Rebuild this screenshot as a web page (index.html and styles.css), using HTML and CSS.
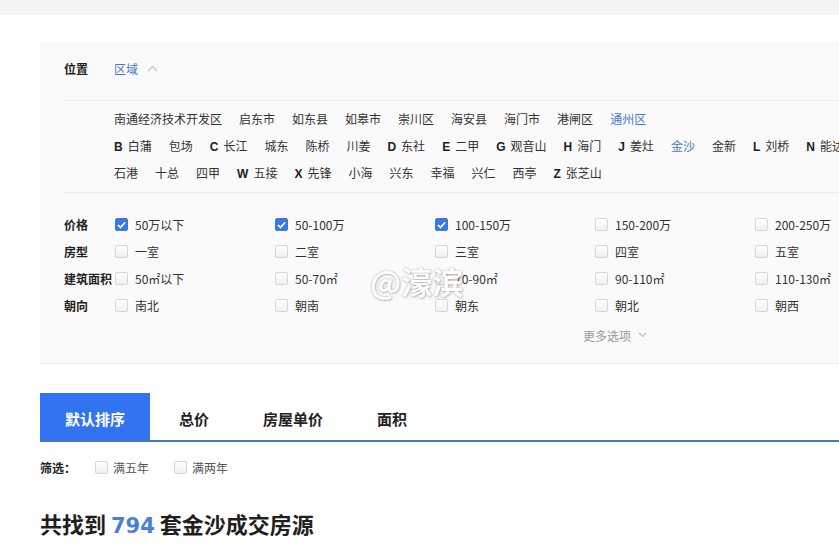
FILE: index.html
```html
<!DOCTYPE html>
<html lang="zh-CN">
<head>
    <meta charset="UTF-8">
    <title>金沙成交房源</title>
    <link rel="stylesheet" href="styles.css">
</head>
<body>
    <div class="topbar"></div>

    <div class="filter-panel">
        <div class="pos-row">
            <span class="label">位置</span>
            <a href="#" class="link active">区域</a>
            <svg class="caret" width="11" height="7" viewBox="0 0 11 7"><polyline points="1,6 5.5,1.5 10,6" fill="none" stroke="#c4c4c4" stroke-width="1.3"/></svg>
        </div>

        <div class="areas">
            <div class="area-row">
                <a href="#">南通经济技术开发区</a>
                <a href="#">启东市</a>
                <a href="#">如东县</a>
                <a href="#">如皋市</a>
                <a href="#">崇川区</a>
                <a href="#">海安县</a>
                <a href="#">海门市</a>
                <a href="#">港闸区</a>
                <a href="#" class="active">通州区</a>
            </div>
            <div class="area-row">
                <a href="#"><b>B</b>白蒲</a>
                <a href="#">包场</a>
                <a href="#"><b>C</b>长江</a>
                <a href="#">城东</a>
                <a href="#">陈桥</a>
                <a href="#">川姜</a>
                <a href="#"><b>D</b>东社</a>
                <a href="#"><b>E</b>二甲</a>
                <a href="#"><b>G</b>观音山</a>
                <a href="#"><b>H</b>海门</a>
                <a href="#"><b>J</b>姜灶</a>
                <a href="#" class="active">金沙</a>
                <a href="#">金新</a>
                <a href="#"><b>L</b>刘桥</a>
                <a href="#"><b>N</b>能达</a>
                <a href="#"><b>P</b>平潮</a>
                <a href="#"><b>S</b>三余</a>
            </div>
            <div class="area-row">
                <a href="#">石港</a>
                <a href="#">十总</a>
                <a href="#">四甲</a>
                <a href="#"><b>W</b>五接</a>
                <a href="#"><b>X</b>先锋</a>
                <a href="#">小海</a>
                <a href="#">兴东</a>
                <a href="#">幸福</a>
                <a href="#">兴仁</a>
                <a href="#">西亭</a>
                <a href="#"><b>Z</b>张芝山</a>
            </div>
        </div>

        <div class="options">
            <div class="opt-row">
                <span class="label">价格</span>
                <label class="opt"><span class="cb on"><svg width="9" height="8" viewBox="0 0 9 8"><polyline points="1,4 3.5,6.5 8,1.2" fill="none" stroke="#fff" stroke-width="1.6"/></svg></span>50万以下</label>
                <label class="opt"><span class="cb on"><svg width="9" height="8" viewBox="0 0 9 8"><polyline points="1,4 3.5,6.5 8,1.2" fill="none" stroke="#fff" stroke-width="1.6"/></svg></span>50-100万</label>
                <label class="opt"><span class="cb on"><svg width="9" height="8" viewBox="0 0 9 8"><polyline points="1,4 3.5,6.5 8,1.2" fill="none" stroke="#fff" stroke-width="1.6"/></svg></span>100-150万</label>
                <label class="opt"><span class="cb"></span>150-200万</label>
                <label class="opt"><span class="cb"></span>200-250万</label>
                <label class="opt"><span class="cb"></span>250-300万</label>
            </div>
            <div class="opt-row">
                <span class="label">房型</span>
                <label class="opt"><span class="cb"></span>一室</label>
                <label class="opt"><span class="cb"></span>二室</label>
                <label class="opt"><span class="cb"></span>三室</label>
                <label class="opt"><span class="cb"></span>四室</label>
                <label class="opt"><span class="cb"></span>五室</label>
                <label class="opt"><span class="cb"></span>五室以上</label>
            </div>
            <div class="opt-row">
                <span class="label">建筑面积</span>
                <label class="opt"><span class="cb"></span>50㎡以下</label>
                <label class="opt"><span class="cb"></span>50-70㎡</label>
                <label class="opt"><span class="cb"></span>70-90㎡</label>
                <label class="opt"><span class="cb"></span>90-110㎡</label>
                <label class="opt"><span class="cb"></span>110-130㎡</label>
                <label class="opt"><span class="cb"></span>130-150㎡</label>
            </div>
            <div class="opt-row">
                <span class="label">朝向</span>
                <label class="opt"><span class="cb"></span>南北</label>
                <label class="opt"><span class="cb"></span>朝南</label>
                <label class="opt"><span class="cb"></span>朝东</label>
                <label class="opt"><span class="cb"></span>朝北</label>
                <label class="opt"><span class="cb"></span>朝西</label>
            </div>
        </div>

        <div class="more">
            <a href="#">更多选项</a>
            <svg width="9" height="6" viewBox="0 0 9 6"><polyline points="1,1 4.5,4.5 8,1" fill="none" stroke="#bbb" stroke-width="1.1"/></svg>
        </div>
    </div>

    <div class="sort-tabs">
        <a href="#" class="tab active">默认排序</a>
        <a href="#" class="tab">总价</a>
        <a href="#" class="tab">房屋单价</a>
        <a href="#" class="tab">面积</a>
    </div>

    <div class="screen">
        <span class="screen-label">筛选：</span>
        <label class="opt"><span class="cb"></span>满五年</label>
        <label class="opt"><span class="cb"></span>满两年</label>
    </div>

    <h2 class="total">共找到 <span>794</span> 套金沙成交房源</h2>

    <div class="watermark">@濠滨</div>
</body>
</html>
```

FILE: styles.css
```css
:root {
    --blue: #3173f0;
    --link-blue: #4a79c9;
    --line: #ececec;
    --text: #333;
}
body {
    margin: 0;
    font-family: "Microsoft YaHei", "Noto Sans CJK SC", "Noto Sans", sans-serif;
    font-size: 12px;
    color: var(--text);
    background: #fff;
    overflow: hidden;
    position: relative;
    width: 839px;
    height: 553px;
}
a {
    color: inherit;
    text-decoration: none;
}
.topbar {
    height: 15px;
    background: #f4f4f4;
}
.filter-panel {
    width: 1126px;
    margin: 26px 0 0 40px;
    padding-left: 24px;
    background: #fafafa;
    border-bottom: 1px solid var(--line);
}
.label {
    display: inline-block;
    width: 51px;
    font-weight: bold;
    color: #222;
}
.pos-row {
    display: flex;
    align-items: center;
    height: 54px;
    padding-bottom: 5px;
    border-bottom: 1px solid var(--line);
}
.pos-row .link {
    margin-left: -1px;
}
.link.active,
.area-row a.active {
    color: var(--link-blue);
}
.caret {
    margin-left: 9px;
}
.areas {
    padding: 4px 0 6px 50px;
    border-bottom: 1px solid var(--line);
}
.area-row {
    display: flex;
    gap: 17px;
    height: 27px;
    line-height: 27px;
    white-space: nowrap;
}
.area-row b {
    font-family: "Liberation Sans", Arial, sans-serif;
    margin-right: 5px;
    color: #222;
}
.options {
    padding-top: 18px;
}
.opt-row {
    display: flex;
    align-items: center;
    height: 27px;
    white-space: nowrap;
}
.opt-row .opt {
    width: 160px;
}
.opt {
    display: flex;
    align-items: center;
}
.cb {
    width: 11px;
    height: 11px;
    border: 1px solid #d6d6d6;
    border-radius: 2px;
    background: linear-gradient(#fff, #f0f0f0);
    margin-right: 7px;
    display: flex;
    align-items: center;
    justify-content: center;
    flex: none;
}
.cb.on {
    background: #3a78e2;
    border-color: #3a78e2;
}
.more {
    display: flex;
    align-items: center;
    justify-content: center;
    gap: 7px;
    height: 24px;
    margin-top: 4px;
    padding: 0 24px 16px 0;
    color: #999;
}
.sort-tabs {
    display: flex;
    gap: 4px;
    width: 1150px;
    margin: 29px 0 0 40px;
    border-bottom: 2px solid #4a78c0;
}
.tab {
    height: 47px;
    line-height: 51px;
    padding: 0 25px;
    font-size: 15px;
    font-weight: bold;
    color: #222;
}
.tab.active {
    background: var(--blue);
    color: #fff;
}
.screen {
    display: flex;
    align-items: center;
    height: 24px;
    margin: 13px 0 0 40px;
}
.screen-label {
    width: 55px;
    font-weight: bold;
    color: #222;
}
.screen .opt {
    color: #555;
    margin-right: 25px;
}
.screen .cb {
    margin-right: 5px;
}
.total {
    margin: 29px 0 0 40px;
    font-size: 22px;
    line-height: 30px;
    font-weight: bold;
    color: #1f1f1f;
}
.total span {
    color: #4a7fd8;
    font-family: "DejaVu Sans", Verdana, sans-serif;
    font-size: 21px;
}
.watermark {
    position: absolute;
    left: 370px;
    top: 258px;
    font-size: 31px;
    font-weight: bold;
    color: #fff;
    text-shadow: 0 0 2px rgba(0, 0, 0, 0.35), 1px 1px 2px rgba(0, 0, 0, 0.2);
    opacity: 0.9;
}
```
